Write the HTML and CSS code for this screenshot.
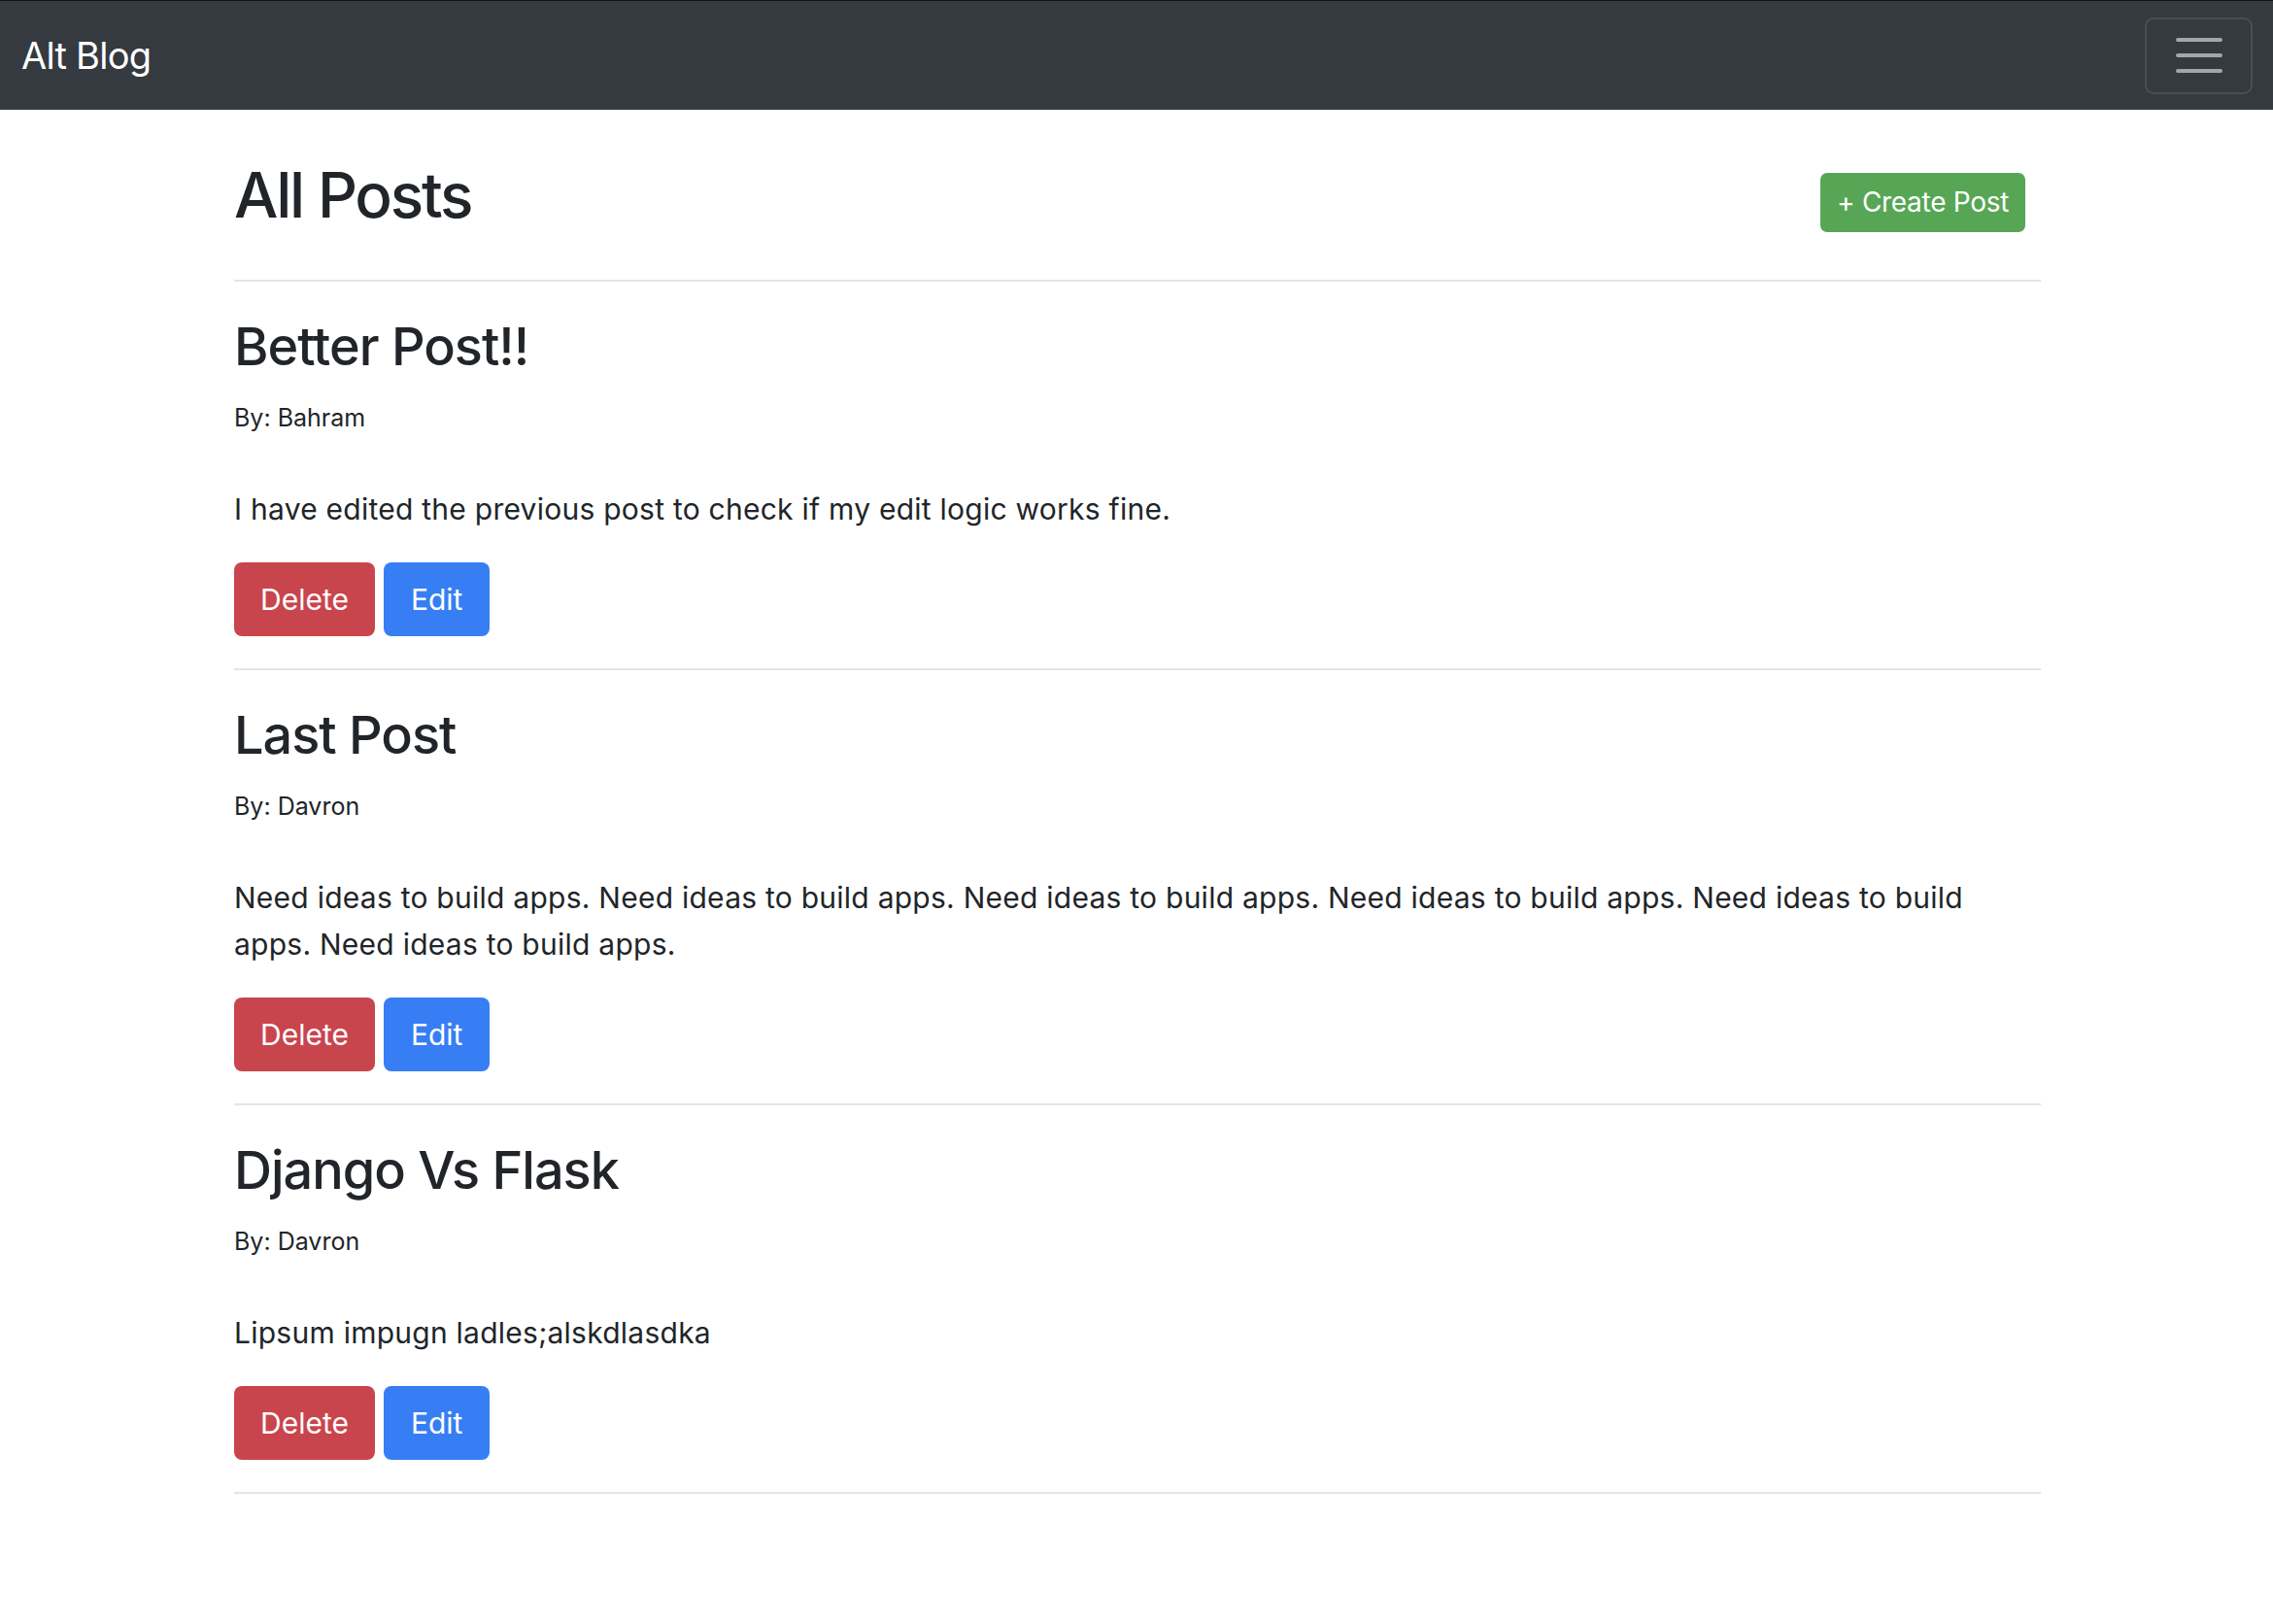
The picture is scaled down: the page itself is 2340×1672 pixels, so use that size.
FILE: index.html
```html
<!DOCTYPE html>
<html lang="en">
<head>
<meta charset="utf-8">
<title>Alt Blog</title>
<link rel="stylesheet" href="styles.css">
</head>
<body>
<nav class="navbar">
  <a class="brand" href="#">Alt Blog</a>
  <button class="toggler" type="button" aria-label="Toggle navigation">
    <svg width="48" height="36" viewBox="0 0 48 36" aria-hidden="true">
      <path d="M2 4h44M2 20h44M2 36h44" stroke="rgba(255,255,255,0.55)" stroke-width="4" stroke-linecap="round" transform="translate(0,-2)"/>
    </svg>
  </button>
</nav>

<main class="container">
  <div class="page-header">
    <h2 class="page-title">All Posts</h2>
    <a class="btn btn-success" href="#">+ Create Post</a>
  </div>
  <hr class="rule">

  <article class="post">
    <h3 class="post-title">Better Post!!</h3>
    <p class="byline">By: Bahram</p>
    <p class="post-body">I have edited the previous post to check if my edit logic works fine.</p>
    <div class="actions">
      <a class="btn btn-danger" href="#">Delete</a>
      <a class="btn btn-primary" href="#">Edit</a>
    </div>
  </article>
  <hr class="rule">

  <article class="post">
    <h3 class="post-title">Last Post</h3>
    <p class="byline">By: Davron</p>
    <p class="post-body">Need ideas to build apps. Need ideas to build apps. Need ideas to build apps. Need ideas to build apps. Need ideas to build apps. Need ideas to build apps.</p>
    <div class="actions">
      <a class="btn btn-danger" href="#">Delete</a>
      <a class="btn btn-primary" href="#">Edit</a>
    </div>
  </article>
  <hr class="rule">

  <article class="post">
    <h3 class="post-title">Django Vs Flask</h3>
    <p class="byline">By: Davron</p>
    <p class="post-body">Lipsum impugn ladles;alskdlasdka</p>
    <div class="actions">
      <a class="btn btn-danger" href="#">Delete</a>
      <a class="btn btn-primary" href="#">Edit</a>
    </div>
  </article>
  <hr class="rule">
</main>
</body>
</html>
```

FILE: styles.css
```css
* {
  box-sizing: border-box;
}

body {
  margin: 0;
  background: #ffffff;
  color: #212529;
  font-family: Inter, "Noto Sans", "Liberation Sans", sans-serif;
  font-size: 30px;
  line-height: 48px;
}

.navbar {
  height: 113px;
  border-top: 1px solid #111315;
  background: #343a40;
  display: flex;
  align-items: center;
  justify-content: space-between;
  padding: 0 21px 0 22px;
}

.brand {
  color: #ffffff;
  text-decoration: none;
  font-size: 38px;
  line-height: 1;
  letter-spacing: -0.75px;
}

.toggler {
  width: 111px;
  height: 79px;
  background: transparent;
  border: 2px solid rgba(255, 255, 255, 0.1);
  border-radius: 9px;
  display: flex;
  align-items: center;
  justify-content: center;
  padding: 0;
}

.toggler svg {
  display: block;
}

.container {
  width: 1860px;
  margin: 0 239px 0 241px;
}

.page-header {
  display: flex;
  justify-content: space-between;
  align-items: flex-start;
  margin-top: 49px;
}

.page-title {
  margin: 0;
  font-size: 64px;
  line-height: 77px;
  font-weight: 500;
  letter-spacing: -2.2px;
}

.btn {
  display: inline-block;
  color: #ffffff;
  text-decoration: none;
  border-radius: 8px;
}

.btn-success {
  background: #57a655;
  font-size: 28px;
  line-height: 61px;
  height: 61px;
  padding: 0 17px;
  margin-top: 16px;
  margin-right: 16px;
  border-radius: 7px;
  letter-spacing: -0.3px;
}

.rule {
  margin: 0;
  border: 0;
  height: 2px;
  background: #e5e5e5;
}

.page-header + .rule {
  margin-top: 49px;
}

.post {
  padding-top: 34px;
  padding-bottom: 33px;
}

.post-title {
  margin: 0;
  font-size: 54px;
  line-height: 65px;
  font-weight: 500;
  letter-spacing: -1px;
}

.byline {
  margin: 23px 0 0;
  font-size: 25px;
  line-height: 36px;
}

.post-body {
  margin: 52px 0 0;
  font-size: 30px;
  line-height: 48px;
  letter-spacing: 0.25px;
}

.actions {
  display: flex;
  gap: 9px;
  margin-top: 31px;
}

.btn-danger,
.btn-primary {
  height: 76px;
  font-size: 30px;
  line-height: 76px;
  padding: 0 27px;
}

.btn-danger {
  background: #c9454d;
}

.btn-primary {
  background: #377ef5;
  padding: 0 28px;
}
```
